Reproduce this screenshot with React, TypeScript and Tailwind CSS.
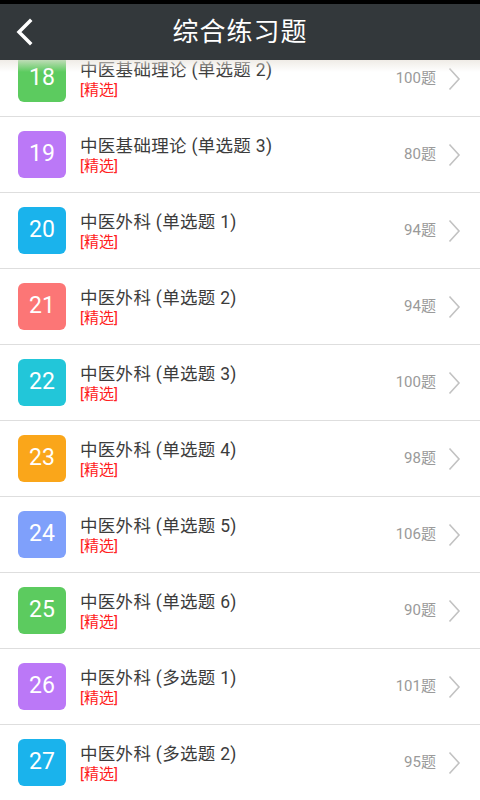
interface Item {
  no: number;
  title: string;
  count: number;
  color: string;
}

const ITEMS: Item[] = [
  { no: 18, title: "中医基础理论 (单选题 2)", count: 100, color: "bg-[#5ccb5f]" },
  { no: 19, title: "中医基础理论 (单选题 3)", count: 80, color: "bg-[#bb78f7]" },
  { no: 20, title: "中医外科 (单选题 1)", count: 94, color: "bg-[#1ab3ec]" },
  { no: 21, title: "中医外科 (单选题 2)", count: 94, color: "bg-[#fc7676]" },
  { no: 22, title: "中医外科 (单选题 3)", count: 100, color: "bg-[#22c6d9]" },
  { no: 23, title: "中医外科 (单选题 4)", count: 98, color: "bg-[#faa61a]" },
  { no: 24, title: "中医外科 (单选题 5)", count: 106, color: "bg-[#7fa0fb]" },
  { no: 25, title: "中医外科 (单选题 6)", count: 90, color: "bg-[#5ccb5f]" },
  { no: 26, title: "中医外科 (多选题 1)", count: 101, color: "bg-[#bb78f7]" },
  { no: 27, title: "中医外科 (多选题 2)", count: 95, color: "bg-[#1ab3ec]" },
];

function Row({ item }: { item: Item }) {
  return (
    <div className="flex h-[76px] shrink-0 items-start border-b border-[#dedede] bg-white">
      <div
        className={`ml-[18px] mt-[14px] flex h-[47px] w-[48px] items-center justify-center rounded-[6px] text-[23px] text-white ${item.color}`}
      >
        {item.no}
      </div>
      <div className="ml-[14px] mt-[17px] flex flex-1 flex-col">
        <span className="text-[17.5px] leading-[24px] tracking-[0.3px] text-[#3c3c3c]">{item.title}</span>
        <span className="text-[15px] leading-[17px] text-[#ff2020]">[精选]</span>
      </div>
      <div className="flex h-full items-center pr-[19px]">
        <span className="text-[15px] text-[#9a9a9a]">{item.count}题</span>
        <svg className="ml-[12px]" width="13" height="24" viewBox="0 0 13 24" fill="none">
          <path d="M1.5 1.5 L11 12 L1.5 22.5" stroke="#c2c2c2" strokeWidth="1.6" />
        </svg>
      </div>
    </div>
  );
}

export default function App() {
  return (
    <div
      className="flex h-[800px] w-[480px] flex-col overflow-hidden bg-white"
      style={{ fontFamily: "Roboto, 'Noto Sans CJK SC', sans-serif" }}
    >
      <div className="h-[4px] shrink-0 bg-black" />
      <div className="relative z-10 flex h-[56px] shrink-0 items-center justify-center bg-[#33383b]">
        <svg
          className="absolute left-[14px] top-[14px]"
          width="22"
          height="28"
          viewBox="0 0 22 28"
          fill="none"
        >
          <path d="M16 3 L5 14 L16 25" stroke="white" strokeWidth="3.5" strokeLinecap="square" />
        </svg>
        <span className="text-[26px] tracking-[1px] text-white">综合练习题</span>
        <div className="absolute left-0 right-0 top-full h-[12px] bg-gradient-to-b from-[#e9e4dc] to-transparent opacity-70" />
      </div>
      <div className="flex flex-col">
        <div className="mt-[-19px] flex flex-col">
          {ITEMS.map((item) => (
            <Row key={item.no} item={item} />
          ))}
        </div>
      </div>
    </div>
  );
}
